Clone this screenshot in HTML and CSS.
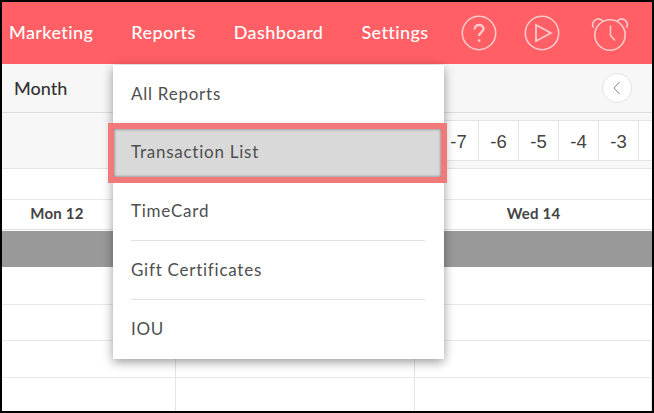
FILE: index.html
```html
<!DOCTYPE html>
<html lang="en">

<head>
    <meta name="viewport" content="width=device-width, initial-scale=1">
    <meta charset="UTF-8">
    <title>Reports menu</title>
    <link rel="stylesheet" href="styles.css">
</head>

<body>
    <div class="app">
        <header class="topbar">
            <nav class="topnav">
                <a>Marketing</a>
                <a>Reports</a>
                <a>Dashboard</a>
                <a>Settings</a>
            </nav>
            <div class="topicons">
                <svg class="icon" width="36" height="36" viewBox="0 0 36 36">
                    <circle cx="18" cy="18" r="16.7"></circle>
                    <path class="thick" d="M13.6 14.4c0-2.8 1.9-4.4 4.5-4.4 2.6 0 4.4 1.6 4.4 3.8 0 3.3-4.4 3.5-4.4 7.2"></path>
                    <path class="thick" d="M18.1 24.4v2.4"></path>
                </svg>
                <svg class="icon" width="36" height="36" viewBox="0 0 36 36">
                    <circle cx="18" cy="18" r="16.7"></circle>
                    <path class="mid" d="M12 10v16L27 18z"></path>
                </svg>
                <svg class="icon" width="38" height="38" viewBox="0 0 38 38">
                    <circle cx="19" cy="21" r="15.2"></circle>
                    <path d="M2.6 13.6a5.6 5.6 0 0 1 8.4-7.2 5 5 0 0 1 1.2 1.4"></path>
                    <path d="M35.4 13.6a5.6 5.6 0 0 0-8.4-7.2 5 5 0 0 0-1.2 1.4"></path>
                    <path d="M19.5 11.5v10l4.5 5"></path>
                </svg>
            </div>
        </header>

        <div class="toolbar">
            <span class="view-name">Month</span>
            <button class="prev-btn" type="button">
                <svg width="8" height="14" viewBox="0 0 8 14">
                    <path d="M6.5 1 1 7l5.5 6"></path>
                </svg>
            </button>
        </div>

        <div class="offset-strip">
            <div class="offset-cells">
                <span>-7</span>
                <span>-6</span>
                <span>-5</span>
                <span>-4</span>
                <span>-3</span>
                <span></span>
            </div>
        </div>

        <div class="blank-row"></div>

        <div class="days">
            <div class="day day-first">Mon 12</div>
            <div class="day">Tue 13</div>
            <div class="day">Wed 14</div>
        </div>

        <div class="band"></div>

        <div class="slot slot-a"></div>
        <div class="slot slot-b"></div>
        <div class="slot slot-cols">
            <div></div>
            <div></div>
            <div></div>
        </div>
        <div class="slot slot-cols slot-last">
            <div></div>
            <div></div>
            <div></div>
        </div>

        <ul class="report-menu">
            <li>All Reports</li>
            <li class="picked">Transaction List</li>
            <li class="lined">TimeCard</li>
            <li class="lined">Gift Certificates</li>
            <li>IOU</li>
        </ul>
    </div>
</body>

</html>
```

FILE: styles.css
```css
* {
    margin: 0;
    padding: 0;
    box-sizing: border-box;
}

body {
    width: 654px;
    height: 413px;
    padding: 2px;
    background: #000;
    font-family: 'Lato', sans-serif;
    overflow: hidden;
}

.app {
    position: relative;
    width: 650px;
    height: 409px;
    background: #fff;
    overflow: hidden;
}

/* Barre du haut */
.topbar {
    height: 62px;
    background: #ff5f65;
    display: flex;
    align-items: center;
    justify-content: space-between;
    padding: 0 23px 0 7px;
}

.topnav {
    display: flex;
    gap: 38px;
    color: #fff;
    font-size: 18px;
    font-weight: 500;
    letter-spacing: 0.4px;
    margin-top: -2px;
}

.topicons {
    display: flex;
    align-items: center;
}

.icon {
    fill: none;
    stroke: #ffc9cb;
    stroke-width: 1.6;
    margin-top: -1px;
}

.icon + .icon {
    margin-left: 27px;
}

.icon + .icon + .icon {
    margin-left: 31px;
}

.icon .thick {
    stroke-width: 2.4;
}

.icon .mid {
    stroke-width: 1.8;
}

/* Month */
.toolbar {
    height: 49px;
    background: #f7f7f7;
    border-bottom: 1px solid #ddd;
    display: flex;
    align-items: center;
    justify-content: space-between;
    padding: 0 20px 0 12px;
}

.view-name {
    font-size: 18px;
    font-weight: 500;
    color: #333;
}

.prev-btn {
    width: 30px;
    height: 30px;
    border: 1px solid #e2e2e2;
    border-radius: 50%;
    background: #fff;
    display: flex;
    align-items: center;
    justify-content: center;
}

.prev-btn path {
    fill: none;
    stroke: #888;
    stroke-width: 1;
}

.offset-strip {
    height: 56px;
    background: #f7f7f7;
    border-bottom: 1px solid #e4e4e4;
    padding-top: 7px;
}

.offset-cells {
    display: flex;
    height: 41px;
    margin-left: 437px;
    background: #fff;
    border-top: 1px solid #e4e4e4;
    border-bottom: 1px solid #e4e4e4;
}

.offset-cells span {
    flex: 0 0 40px;
    border-right: 1px solid #e4e4e4;
    font-family: 'Liberation Sans', sans-serif;
    font-size: 18.5px;
    color: #444;
    text-align: center;
    line-height: 41px;
}

.blank-row {
    height: 31px;
    border-bottom: 1px solid #e8e8e8;
}

.days {
    display: grid;
    grid-template-columns: 174px 239px 237px;
    height: 30px;
    border-bottom: 1px solid #e4e4e4;
}

.day {
    font-size: 15px;
    font-weight: 700;
    letter-spacing: 0.2px;
    color: #444;
    text-align: center;
    line-height: 27px;
}

.day-first {
    padding-right: 64px;
}

.band {
    height: 37px;
    background: #999;
    border-top: 1px solid #fff;
}

.slot {
    height: 37px;
    border-bottom: 1px solid #e8e8e8;
}

.slot-a {
    height: 38px;
}

.slot-b {
    height: 36px;
}

.slot-cols {
    display: grid;
    grid-template-columns: 174px 239px 237px;
}

.slot-cols div {
    border-right: 1px solid #e4e4e4;
}

.slot-last {
    height: 33px;
    border-bottom: 0;
}

/* Menu deroulant */
.report-menu {
    position: absolute;
    top: 63px;
    left: 111px;
    width: 331px;
    height: 294px;
    background: #fff;
    list-style: none;
    box-shadow: 0 3px 10px rgba(0, 0, 0, 0.4);
    font-size: 17px;
    letter-spacing: 0.75px;
    color: #4f4f4f;
}

.report-menu li {
    height: 59px;
    line-height: 58px;
    padding-left: 18px;
    position: relative;
}

.report-menu .lined::after {
    content: '';
    position: absolute;
    left: 18px;
    right: 19px;
    bottom: 0;
    height: 1px;
    background: #e2e2e2;
}

.report-menu .picked {
    height: 48px;
    line-height: 46px;
    margin: 5px 3px 5px 1px;
    padding-left: 17px;
    background: #d9d9d9;
    outline: 6px solid #f07a7a;
    box-shadow: inset 0 0 3px rgba(0, 0, 0, 0.5);
}
```
